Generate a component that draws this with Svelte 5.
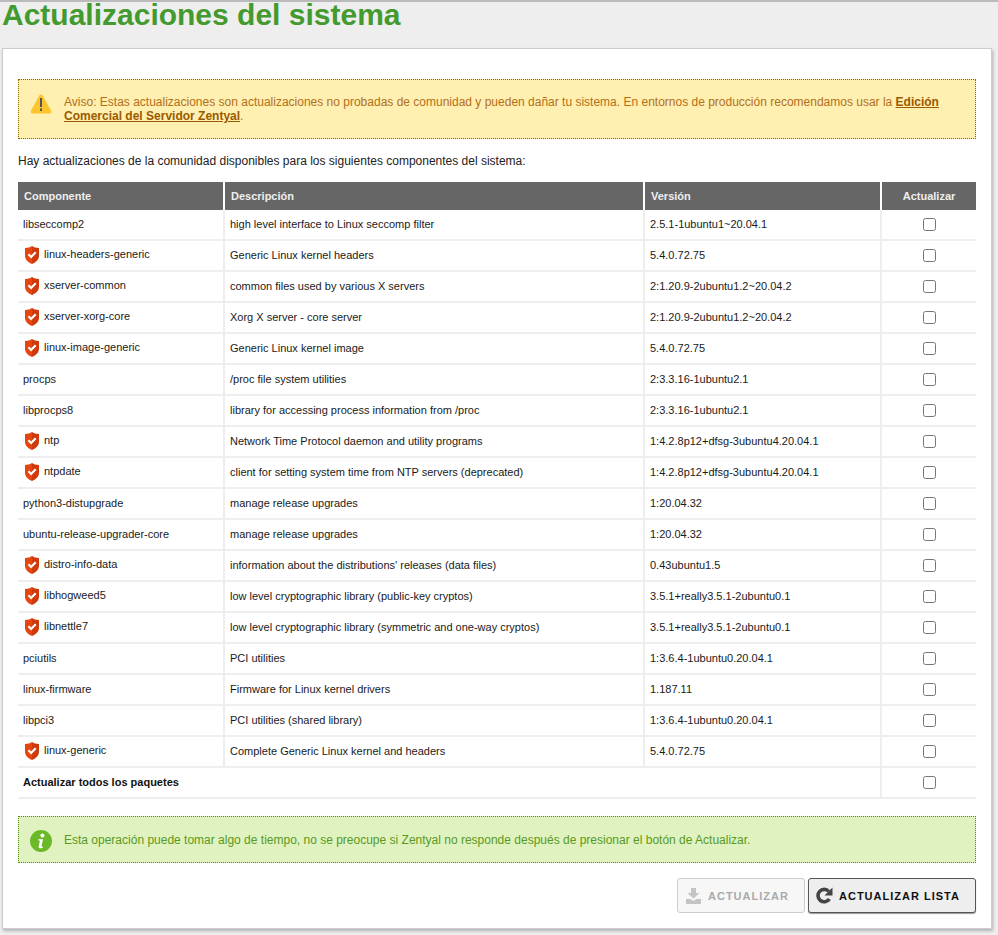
<script>
  const rows = [
    ['libseccomp2', 'high level interface to Linux seccomp filter', '2.5.1-1ubuntu1~20.04.1', false],
    ['linux-headers-generic', 'Generic Linux kernel headers', '5.4.0.72.75', true],
    ['xserver-common', 'common files used by various X servers', '2:1.20.9-2ubuntu1.2~20.04.2', true],
    ['xserver-xorg-core', 'Xorg X server - core server', '2:1.20.9-2ubuntu1.2~20.04.2', true],
    ['linux-image-generic', 'Generic Linux kernel image', '5.4.0.72.75', true],
    ['procps', '/proc file system utilities', '2:3.3.16-1ubuntu2.1', false],
    ['libprocps8', 'library for accessing process information from /proc', '2:3.3.16-1ubuntu2.1', false],
    ['ntp', 'Network Time Protocol daemon and utility programs', '1:4.2.8p12+dfsg-3ubuntu4.20.04.1', true],
    ['ntpdate', 'client for setting system time from NTP servers (deprecated)', '1:4.2.8p12+dfsg-3ubuntu4.20.04.1', true],
    ['python3-distupgrade', 'manage release upgrades', '1:20.04.32', false],
    ['ubuntu-release-upgrader-core', 'manage release upgrades', '1:20.04.32', false],
    ['distro-info-data', "information about the distributions' releases (data files)", '0.43ubuntu1.5', true],
    ['libhogweed5', 'low level cryptographic library (public-key cryptos)', '3.5.1+really3.5.1-2ubuntu0.1', true],
    ['libnettle7', 'low level cryptographic library (symmetric and one-way cryptos)', '3.5.1+really3.5.1-2ubuntu0.1', true],
    ['pciutils', 'PCI utilities', '1:3.6.4-1ubuntu0.20.04.1', false],
    ['linux-firmware', 'Firmware for Linux kernel drivers', '1.187.11', false],
    ['libpci3', 'PCI utilities (shared library)', '1:3.6.4-1ubuntu0.20.04.1', false],
    ['linux-generic', 'Complete Generic Linux kernel and headers', '5.4.0.72.75', true]
  ];
</script>

<div class="page">
  <h1>Actualizaciones del sistema</h1>
  <main class="card">
    <div class="note warn">
      <svg class="note-icon" width="22" height="20" viewBox="0 0 22 20" aria-hidden="true">
        <path d="M11 .5c.8 0 1.300.4 1.700 1.100l8.300 14.800c.8 1.500.1 3.100-1.600 3.100H2.600c-1.700 0-2.400-1.600-1.600-3.100L9.300 1.600C9.700.9 10.200.5 11 .5z" fill="#fcc52d"/>
        <rect x="10" y="4" width="2" height="9" fill="#555"/>
        <rect x="10" y="14.500" width="2" height="2.500" fill="#555"/>
      </svg>
      <p>Aviso: Estas actualizaciones son actualizaciones no probadas de comunidad y pueden dañar tu sistema. En entornos de producción recomendamos usar la <a href="#top">Edición Comercial del Servidor Zentyal</a>.</p>
    </div>

    <p class="intro">Hay actualizaciones de la comunidad disponibles para los siguientes componentes del sistema:</p>

    <table>
      <colgroup>
        <col class="c1" /><col class="c2" /><col class="c3" /><col class="c4" />
      </colgroup>
      <thead>
        <tr>
          <th>Componente</th>
          <th>Descripción</th>
          <th>Versión</th>
          <th class="center">Actualizar</th>
        </tr>
      </thead>
      <tbody>
        {#each rows as [name, desc, version, secure]}
          <tr>
            <td>
              {#if secure}
                <span class="named">
                  <svg class="shield" width="14" height="18" viewBox="0 0 14 18" aria-hidden="true">
                    <path d="M7 0c1.700 1.300 4 1.900 7 2.100v7.400c0 3.900-2.700 6.700-7 8.500V0z" fill="#cf3a0b"/>
                    <path d="M7 0C5.300 1.300 3 1.900 0 2.100v7.400C0 13.400 2.700 16.200 7 18V0z" fill="#e5450f"/>
                    <path d="M3.400 8.300l2.700 2.700 4.600-4.700" fill="none" stroke="#fff" stroke-width="2.200"/>
                  </svg>
                  {name}
                </span>
              {:else}
                {name}
              {/if}
            </td>
            <td>{desc}</td>
            <td>{version}</td>
            <td class="center"><input type="checkbox" /></td>
          </tr>
        {/each}
        <tr>
          <td colspan="3"><strong>Actualizar todos los paquetes</strong></td>
          <td class="center"><input type="checkbox" /></td>
        </tr>
      </tbody>
    </table>

    <div class="note ok">
      <svg class="note-icon" width="22" height="22" viewBox="0 0 22 22" aria-hidden="true">
        <circle cx="11" cy="11" r="11" fill="#6cb928"/>
        <circle cx="12.400" cy="5.600" r="2" fill="#fff"/>
        <path d="M8.300 9.300h4.700l-1.500 7c-.1.500.3.600 1.500.2l-.2 1.300c-1.300.6-4.100 1.100-4.200-.7l1.300-6.500-1.700-.2z" fill="#fff"/>
      </svg>
      <p>Esta operación puede tomar algo de tiempo, no se preocupe si Zentyal no responde después de presionar el botón de Actualizar.</p>
    </div>

    <div class="actions">
      <button class="btn" disabled>
        <svg width="15" height="16" viewBox="0 0 15 16" aria-hidden="true">
          <path d="M5 0h5v5h3.500L7.500 10.500 1.500 5H5z" fill="#c4c4c4"/>
          <path d="M0 11h4.500l3 2 3-2H15v5H0z" fill="#c4c4c4"/>
        </svg>
        Actualizar
      </button>
      <button class="btn primary">
        <svg width="17" height="17" viewBox="0 0 17 17" aria-hidden="true">
          <path d="M13.400 12A6.200 6.200 0 1 1 12.800 4.400" fill="none" stroke="#444" stroke-width="3.600"/>
          <path d="M16.500 .5v8H8.500z" fill="#444"/>
        </svg>
        Actualizar lista
      </button>
    </div>
  </main>
</div>

<style>
  :global(body) {
    margin: 0;
    background: #eeeeee;
  }

  .page {
    border-top: 2px solid #bbbbbb;
    height: 933px;
    overflow: hidden;
    font-family: "Liberation Sans", Arial, sans-serif;
    font-size: 12px;
    color: #111;
  }

  h1 {
    margin: 0;
    padding: 0 0 0 2px;
    height: 46px;
    font-size: 30px;
    line-height: 26px;
    font-weight: 700;
    color: #439a2e;
  }

  .card {
    width: 958px;
    height: 849px;
    margin-left: 2px;
    padding: 30px 15px 0;
    background: #fff;
    border: 1px solid #cccccc;
    box-shadow: 1px 2px 3px rgba(0, 0, 0, 0.25);
    box-sizing: content-box;
  }

  .note {
    display: flex;
    align-items: center;
    box-sizing: border-box;
    padding: 0 11px;
    gap: 12px;
  }

  .note p {
    margin: 0;
    line-height: 14px;
  }

  .note-icon {
    flex: none;
  }

  .warn {
    height: 60px;
    background: #ffefb0;
    border: 1px dotted #8a6100;
    color: #b3701a;
  }

  .warn .note-icon {
    align-self: flex-start;
    margin-top: 14px;
  }

  .warn a {
    color: #9a5a00;
    font-weight: 700;
  }

  .ok {
    height: 47px;
    margin-top: 17px;
    background: #e0f2c0;
    border: 1px dotted #4f8f10;
    color: #589a1e;
  }

  .ok .note-icon {
    margin-top: 2px;
  }

  .intro {
    margin: 15px 0 0;
    height: 28px;
    line-height: 14px;
    color: #222;
  }

  table {
    width: 958px;
    table-layout: fixed;
    border-collapse: separate;
    border-spacing: 0;
    font-size: 11px;
  }

  .c1 { width: 207px; }
  .c2 { width: 420px; }
  .c3 { width: 237px; }
  .c4 { width: 94px; }

  th {
    height: 28px;
    padding: 0 6px;
    box-sizing: border-box;
    background: #666666;
    color: #eeeeee;
    text-align: left;
    font-weight: 700;
    border-right: 2px solid #fff;
  }

  th:last-child,
  td:last-child {
    border-right: 0;
  }

  td {
    height: 31px;
    padding: 0 5px 2px;
    box-sizing: border-box;
    border-right: 2px solid #eeeeee;
    border-bottom: 2px solid #eeeeee;
    color: #1a1a1a;
    vertical-align: middle;
  }

  td strong {
    color: #111;
  }

  th.center,
  td.center {
    text-align: center;
    padding: 0;
  }

  .named {
    display: flex;
    align-items: center;
    gap: 5px;
    margin-left: 2px;
    margin-bottom: 2px;
  }

  .shield {
    flex: none;
    margin-top: 3px;
  }

  input[type="checkbox"] {
    appearance: none;
    display: block;
    width: 13px;
    height: 13px;
    margin: 0 auto;
    background: #fff;
    border: 1px solid #767676;
    border-radius: 2.500px;
  }

  .actions {
    display: flex;
    justify-content: flex-end;
    gap: 3px;
    margin-top: 15px;
  }

  .btn {
    display: flex;
    align-items: center;
    gap: 7px;
    height: 35px;
    padding: 0 8px;
    box-sizing: border-box;
    border-radius: 3px;
    font-family: "Liberation Sans", Arial, sans-serif;
    font-size: 11px;
    font-weight: 700;
    letter-spacing: 1px;
    text-transform: uppercase;
  }

  .btn:disabled {
    width: 128px;
    background: #f7f7f7;
    border: 1px solid #cccccc;
    color: #aaaaaa;
  }

  .primary {
    width: 168px;
    gap: 6px;
    padding: 0 7px;
    background: #eeeeee;
    border: 1px solid #555555;
    box-shadow: 0 1px 1px rgba(0, 0, 0, 0.4);
    color: #111;
  }
</style>
